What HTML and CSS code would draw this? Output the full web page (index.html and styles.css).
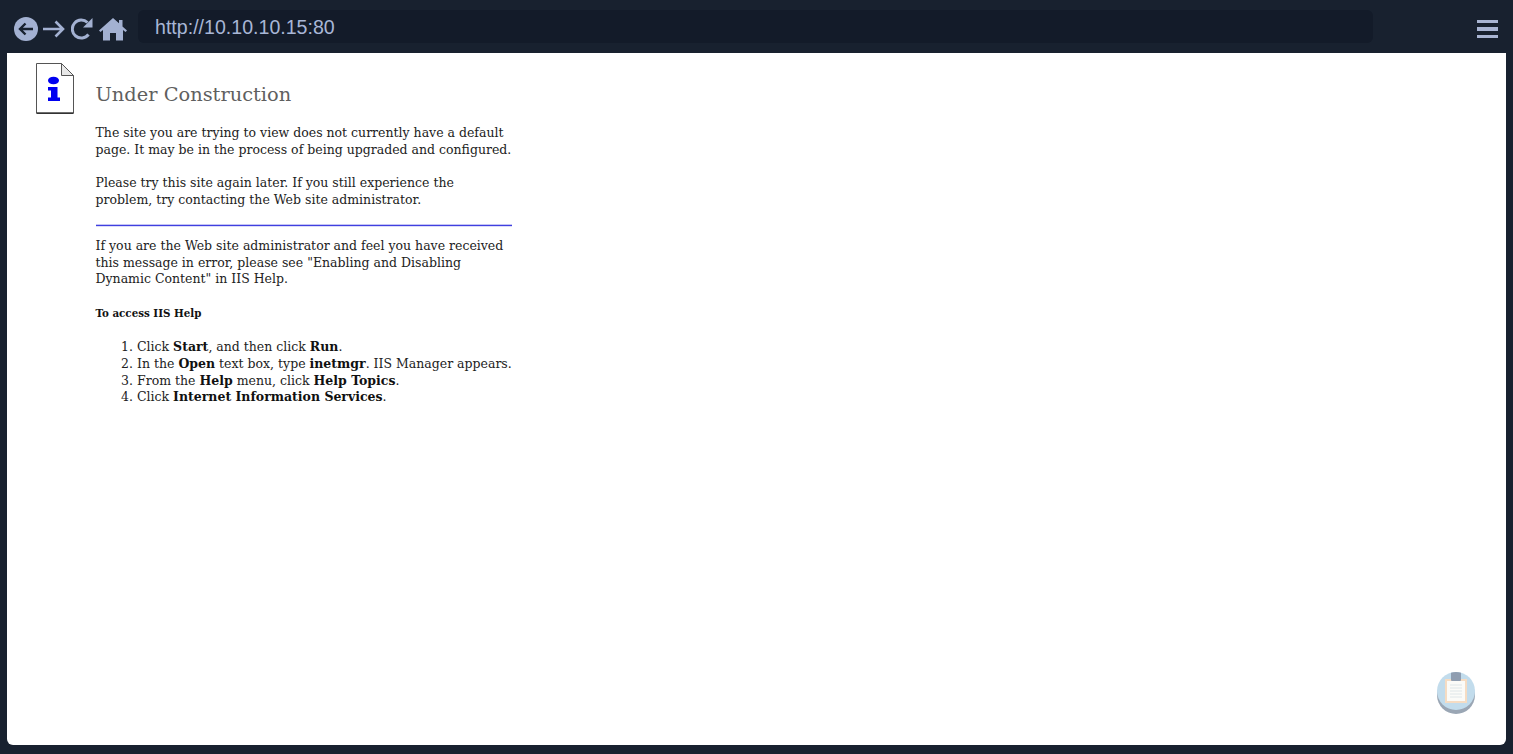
FILE: index.html
```html
<!DOCTYPE html>
<html lang="en">
<head>
<meta charset="utf-8">
<title>Under Construction</title>
<link rel="stylesheet" href="styles.css">
</head>
<body>
<div class="window">
  <header class="toolbar">
    <nav class="nav">
      <svg class="ic ic-back" viewBox="0 0 24 24"><circle cx="12" cy="12" r="12" fill="#a3b1d2"/><path d="M19 12H6M11.500 6.500 6 12l5.500 5.500" fill="none" stroke="#18212f" stroke-width="2.400"/></svg>
      <svg class="ic ic-fwd" viewBox="0 0 22 18"><path d="M0 9h20M12.500 1.500 20 9l-7.500 7.500" fill="none" stroke="#a3b1d2" stroke-width="2.600"/></svg>
      <svg class="ic ic-reload" viewBox="0 0 22 22"><path d="M17.500 16.500A9 9 0 1 1 16.500 4.500" fill="none" stroke="#a3b1d2" stroke-width="3"/><path d="M21.500 0v9.500H12z" fill="#a3b1d2"/></svg>
      <svg class="ic ic-home" viewBox="0 0 28 24"><path d="M14 1 0 13.500l1.500 1.500L4 13v10.500h7V16h6v7.500h7V13l2.500 2 1.500-1.500L23.500 9.500V3h-3.500v3.300z" fill="#a3b1d2"/></svg>
    </nav>
    <div class="address">http://10.10.10.15:80</div>
    <div class="menu"><span></span><span></span><span></span></div>
  </header>
  <main class="page">
    <div class="notice">
      <svg class="doc" viewBox="0 0 38 51">
        <path d="M.5.500h25l12 12v37.500H.5z" fill="#fff" stroke="#555"/>
        <path d="M.5 50.200h37" stroke="#333" stroke-width="1.500"/>
        <path d="M25.500.5v12h12z" fill="#e8e8e8" stroke="#555"/>
        <ellipse cx="17.500" cy="17.500" rx="5.500" ry="3.800" fill="#0000f0"/>
        <path d="M12 24h9.500v10.500H24V38H12v-3.500h3V27.500h-3z" fill="#0000f0"/>
      </svg>
      <div class="body">
        <h1>Under Construction</h1>
        <p>The site you are trying to view does not currently have a default page. It may be in the process of being upgraded and configured.</p>
        <p class="p-next">Please try this site again later. If you still experience the<br>problem, try contacting the Web site administrator.</p>
        <hr>
        <p>If you are the Web site administrator and feel you have received this message in error, please see "Enabling and Disabling Dynamic Content" in IIS Help.</p>
        <h2>To access IIS Help</h2>
        <ol>
          <li>Click <b>Start</b>, and then click <b>Run</b>.</li>
          <li>In the <b>Open</b> text box, type <b>inetmgr</b>. IIS Manager appears.</li>
          <li>From the <b>Help</b> menu, click <b>Help Topics</b>.</li>
          <li>Click <b>Internet Information Services</b>.</li>
        </ol>
      </div>
    </div>
    <svg class="clip" viewBox="0 0 38 42">
      <circle cx="19" cy="23" r="19" fill="#9aa6b4"/>
      <circle cx="19" cy="19" r="19" fill="#c2dcec"/>
      <rect x="8" y="7" width="22" height="24" fill="#f5dcc3"/>
      <rect x="10" y="9" width="18" height="20" fill="#fbfbf8"/>
      <path d="M13 13h12M13 16h12M13 19h12M13 22h12M13 25h12" stroke="#dfe6e8"/>
      <path d="M14 .7A19 19 0 0 1 24 .7V8a1 1 0 0 1-1 1h-8a1 1 0 0 1-1-1z" fill="#8f9db0"/>
    </svg>
  </main>
</div>
</body>
</html>
```
FILE: styles.css
```css
* { box-sizing: border-box; }
html, body { margin: 0; height: 100%; overflow: hidden; }
body { background: #18212f; }
.window { height: 754px; display: flex; flex-direction: column; padding: 0 7px 9px; }
.toolbar { height: 53px; flex: none; display: flex; align-items: center; padding: 5px 8px 0 7px; }
.nav { display: flex; align-items: center; width: 124px; flex: none; }
.ic { display: block; flex: none; }
.ic-back { width: 24px; height: 24px; }
.ic-fwd { width: 22px; height: 18px; margin-left: 5px; }
.ic-reload { width: 22px; height: 22px; margin-left: 6px; }
.ic-home { width: 28px; height: 24px; margin-left: 6px; }
.address { width: 1235px; height: 33px; flex: none; align-self: flex-start; margin-top: 5px; background: #131b29; border-radius: 6px; padding-left: 17px; font: 19.600px/35px "Liberation Sans", Arial, sans-serif; color: #a8b6d6; }
.menu { margin-left: auto; width: 21px; display: flex; flex-direction: column; gap: 4px; }
.menu span { display: block; height: 3.500px; background: #a9b5d3; }
.page { flex: 1; background: #fff; border-radius: 0 0 6px 6px; position: relative; padding: 10px 0 0 29px; }
.notice { display: flex; align-items: flex-start; }
.doc { width: 38px; height: 51px; flex: none; display: block; }
.body { width: 416.500px; margin-left: 21.500px; font: 12.500px/16.700px "DejaVu Serif", "Liberation Serif", serif; color: #222; padding-top: 19px; }
h1 { margin: 0 0 18px; font: 400 19.400px/25px "DejaVu Serif", serif; color: #5f5f5f; }
p { margin: 0; }
.p-next { margin-top: 16.700px; }
hr { height: 1px; border: 0; background: #4040e0; box-shadow: 0 -1px 0 #c4c4f4, 0 1px 0 #dcdcf8; margin: 16.500px 0 11.800px .5px; }
h2 { margin: 17.500px 0 16.700px; font: 700 10.300px/17px "DejaVu Serif", serif; color: #111; }
ol { margin: 0; padding-left: 41.500px; }
li { white-space: nowrap; }
b { color: #111; }
.clip { position: absolute; right: 31px; bottom: 31px; width: 38px; height: 42px; }
```
